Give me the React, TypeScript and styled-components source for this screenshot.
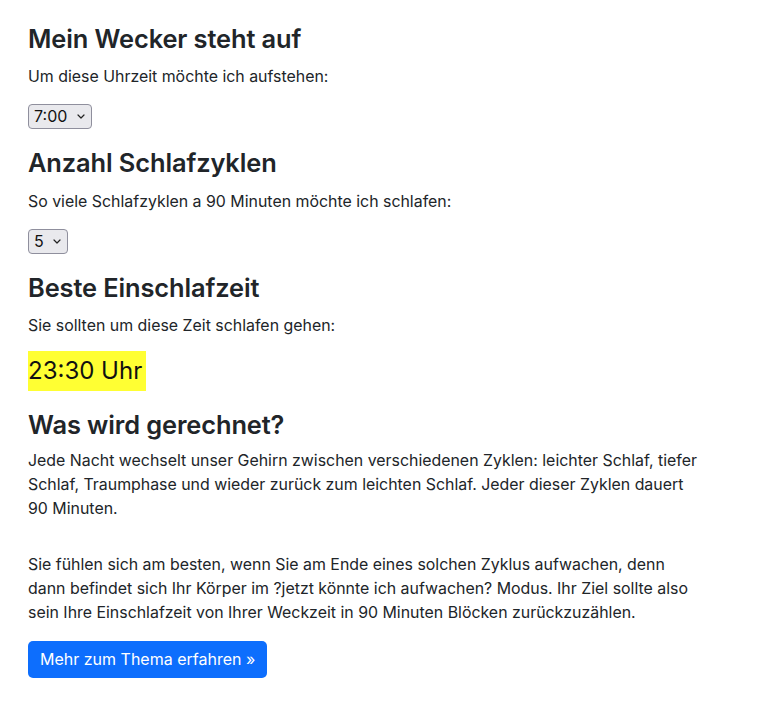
import React from "react";
import styled, { createGlobalStyle } from "styled-components";

const Global = createGlobalStyle`
  html, body { margin: 0; padding: 0; background: #fff; }
  body {
    font-family: Inter, "Liberation Sans", Arial, sans-serif;
    font-size: 15.9px;
    line-height: 1.5;
    color: #212529;
  }
  * { box-sizing: border-box; }
`;

const Page = styled.main`
  padding: 24px 28px 40px 28px;
  max-width: 730px;
  display: flex;
  flex-direction: column;
  align-items: flex-start;
`;

const Heading = styled.h3<{ $mb?: number }>`
  margin: 0 0 ${(p) => p.$mb ?? 11}px 0;
  font-size: 25.4px;
  line-height: 1.2;
  font-weight: 600;
  letter-spacing: -0.1px;
`;

const Text = styled.p<{ $gap?: number }>`
  margin: 0 0 ${(p) => p.$gap ?? 15}px 0;
  font-size: 15.9px;
  line-height: 24px;
`;

const SelectWrap = styled.div`
  position: relative;
  display: inline-flex;
  margin-bottom: 19px;
`;

const Select = styled.select`
  appearance: none;
  -webkit-appearance: none;
  font-family: Inter, "Liberation Sans", Arial, sans-serif;
  font-size: 16px;
  color: #111;
  height: 25px;
  padding: 0 22px 0 5px;
  background: #e9e9ed;
  border: 1px solid #8f8f9d;
  border-radius: 4px;
  line-height: 23px;
`;

const Chevron = styled.svg`
  position: absolute;
  right: 7px;
  top: 10px;
  width: 8px;
  height: 5px;
  pointer-events: none;
`;

const Highlight = styled.div`
  display: inline-block;
  background: #ffff33;
  color: #111;
  font-size: 24px;
  line-height: 40px;
  height: 40px;
  padding: 0 4px 0 0;
  margin-bottom: 19px;
`;

const Button = styled.a`
  display: inline-block;
  background: #0d6efd;
  color: #fff;
  font-size: 16px;
  line-height: 25px;
  padding: 6px 12px;
  border-radius: 5px;
  text-decoration: none;
`;

function Dropdown({ options, value }: { options: string[]; value: string }) {
  return (
    <SelectWrap>
      <Select defaultValue={value}>
        {options.map((o) => (
          <option key={o} value={o}>
            {o}
          </option>
        ))}
      </Select>
      <Chevron viewBox="0 0 8 5">
        <path d="M1 1l3 3 3-3" fill="none" stroke="#222" strokeWidth="1.2" strokeLinecap="round" strokeLinejoin="round" />
      </Chevron>
    </SelectWrap>
  );
}

const times = ["5:00", "5:30", "6:00", "6:30", "7:00", "7:30", "8:00", "8:30", "9:00"];
const cycles = ["3", "4", "5", "6"];

export default function App() {
  return (
    <>
      <Global />
      <Page>
        <Heading>Mein Wecker steht auf</Heading>
        <Text>Um diese Uhrzeit möchte ich aufstehen:</Text>
        <Dropdown options={times} value="7:00" />

        <Heading>Anzahl Schlafzyklen</Heading>
        <Text>So viele Schlafzyklen a 90 Minuten möchte ich schlafen:</Text>
        <Dropdown options={cycles} value="5" />

        <Heading>Beste Einschlafzeit</Heading>
        <Text $gap={13}>Sie sollten um diese Zeit schlafen gehen:</Text>
        <Highlight>23:30 Uhr</Highlight>

        <Heading $mb={8}>Was wird gerechnet?</Heading>
        <Text $gap={32}>
          Jede Nacht wechselt unser Gehirn zwischen verschiedenen Zyklen: leichter Schlaf, tiefer Schlaf,
          Traumphase und wieder zurück zum leichten Schlaf. Jeder dieser Zyklen dauert 90 Minuten.
        </Text>
        <Text $gap={16}>
          Sie fühlen sich am besten, wenn Sie am Ende eines solchen Zyklus aufwachen, denn dann befindet sich Ihr
          Körper im ?jetzt könnte ich aufwachen? Modus. Ihr Ziel sollte also sein Ihre Einschlafzeit von Ihrer
          Weckzeit in 90 Minuten Blöcken zurückzuzählen.
        </Text>
        <Button href="#">Mehr zum Thema erfahren »</Button>
      </Page>
    </>
  );
}
